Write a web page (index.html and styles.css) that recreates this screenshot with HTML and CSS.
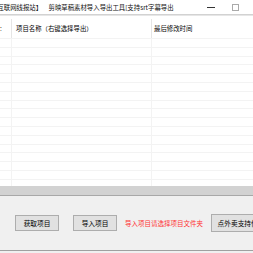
FILE: index.html
```html
<!DOCTYPE html>
<html lang="zh-CN">
<head>
    <meta charset="UTF-8">
    <title>剪映草稿素材导入导出工具</title>
    <link rel="stylesheet" href="styles.css">
</head>
<body>

<div class="titlebar">
    <div class="title">【互联网线报站】&ensp;&ensp;剪映草稿素材导入导出工具[支持srt字幕导出</div>
    <div class="controls">
        <span class="btn-min"></span>
        <span class="btn-max"></span>
    </div>
</div>

<div class="list">
    <div class="list-head">
        <div class="col c1">:</div>
        <div class="col c2">项目名称（右键选择导出）</div>
        <div class="col c3">最后修改时间</div>
    </div>
    <div class="list-body" id="rows"></div>
</div>

<div class="scroll-band"></div>

<div class="actions">
    <button class="btn">获取项目</button>
    <button class="btn">导入项目</button>
    <span class="hint">导入项目请选择项目文件夹</span>
    <button class="btn btn-wide">点外卖支持作者</button>
</div>

<script>
// 空白行
var rows = document.getElementById('rows');
for (var i = 0; i < 17; i++) {
    rows.innerHTML += '<div class="row"><div class="col c1"></div><div class="col c2"></div><div class="col c3"></div></div>';
}
</script>

</body>
</html>
```

FILE: styles.css
```css
body {
    margin: 0;
    width: 253px;
    height: 253px;
    overflow: hidden;
    background-color: #f0f0f0;
    font-family: "Noto Sans CJK SC", sans-serif;
    font-size: 6.4px;
    color: #000;
}
.titlebar {
    height: 15px;
    padding-top: 1px;
    box-sizing: border-box;
    background-color: #fff;
    border-bottom: 1px solid #d2d2d2;
    display: grid;
    grid-template-columns: 177px 76px;
    align-items: center;
    overflow: hidden;
    white-space: nowrap;
}
.title {
    margin-left: -9px;
    overflow: hidden;
    color: #111;
}
.controls {
    display: flex;
    align-items: center;
    padding-left: 30px;
}
.btn-min {
    width: 8px;
    height: 1px;
    background-color: #333;
}
.btn-max {
    width: 5px;
    height: 5px;
    border: 1px solid #aaa;
    margin-left: 17px;
    margin-top: -1px;
}
.list {
    background-color: #fff;
    height: 171px;
    overflow: hidden;
    padding-top: 3px;
    box-sizing: border-box;
    border-top: 1px solid #e6e6e6;
}
.list-head,
.row {
    display: flex;
}
.list-head {
    height: 19px;
    align-items: center;
    white-space: nowrap;
}
.row {
    height: 8.8px;
    box-sizing: border-box;
    border-top: 1px solid #f3f3f3;
}
.col {
    height: 100%;
    box-sizing: border-box;
    overflow: hidden;
    display: flex;
    align-items: center;
}
.c1 {
    width: 12px;
    border-right: 1px solid #f3f3f3;
}
.c2 {
    width: 140px;
    padding-left: 4px;
    border-right: 1px solid #f3f3f3;
}
.c3 {
    flex: 1;
    padding-left: 2px;
}
.list-head .c1,
.list-head .c2 {
    border-right-color: #e5e5e5;
}
.scroll-band {
    height: 9px;
    background-color: #d2d2d2;
    border-bottom: 1px solid #a8a8a8;
}
.actions {
    height: 54px;
    display: flex;
    align-items: center;
    padding-left: 15px;
    border-bottom: 1px solid #a0a0a0;
    white-space: nowrap;
    overflow: hidden;
}
.btn {
    width: 44px;
    height: 16px;
    padding: 0;
    font-family: inherit;
    font-size: 6.7px;
    background-color: #e1e1e1;
    border: 1px solid #adadad;
    flex-shrink: 0;
    margin-right: 14px;
}
.hint {
    color: #f33;
    font-size: 6.5px;
    margin-left: -6px;
    margin-right: 8px;
    flex-shrink: 0;
}
.btn-wide {
    width: 60px;
    height: 18px;
}
```
